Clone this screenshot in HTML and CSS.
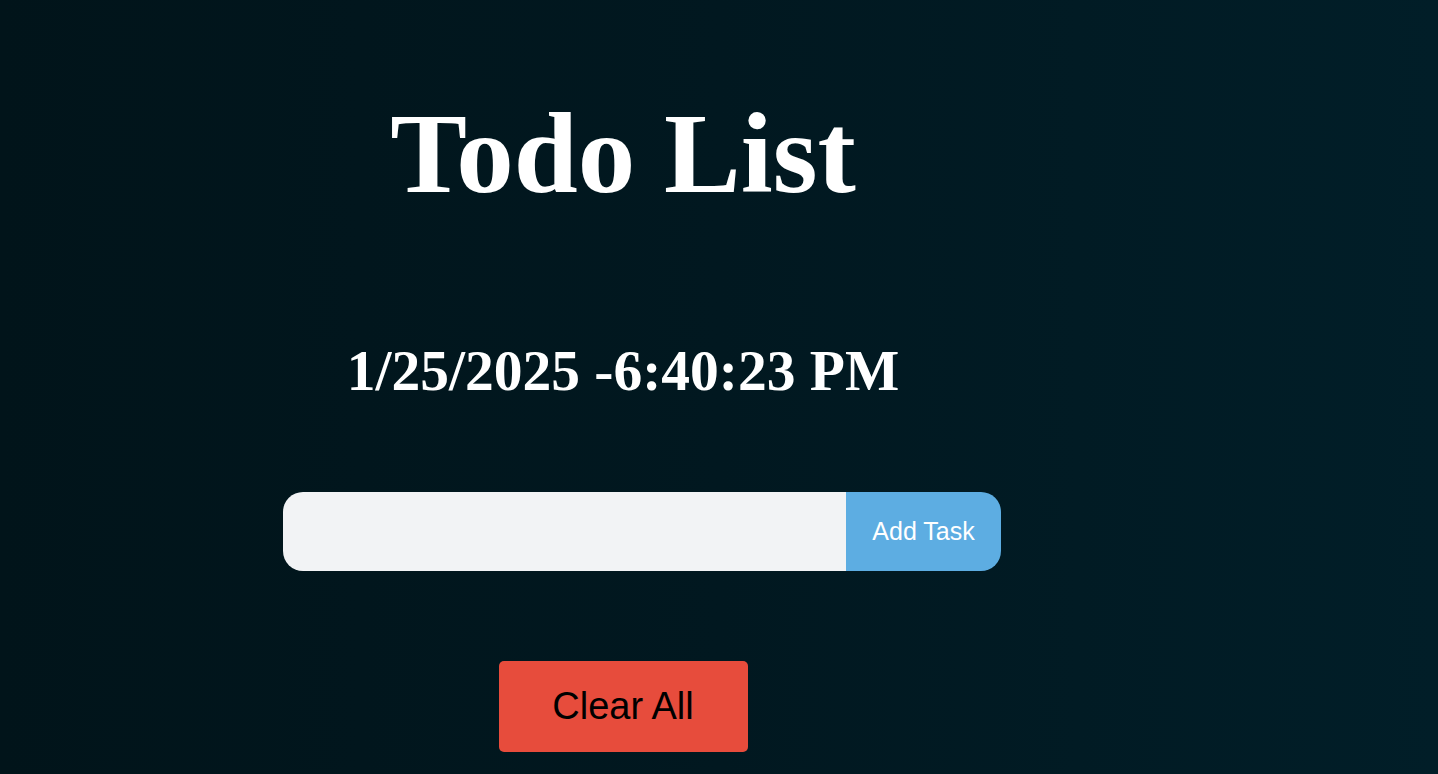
FILE: index.html
```html
<!DOCTYPE html>
<html lang="en">
<head>
<meta charset="utf-8">
<title>Todo List</title>
<link rel="stylesheet" href="styles.css">
</head>
<body>
<main class="app">
  <h1 class="title">Todo List</h1>
  <h2 class="datetime">1/25/2025 -6:40:23 PM</h2>
  <form class="task-form">
    <input class="task-input" type="text" aria-label="New task">
    <button class="add-btn" type="button">Add Task</button>
  </form>
  <ul class="task-list"></ul>
  <button class="clear-btn" type="button">Clear All</button>
</main>
</body>
</html>
```

FILE: styles.css
```css
html, body {
  height: 100%;
}
body {
  margin: 0;
  background: linear-gradient(to right, #01141a 0%, #011820 50%, #011e28 100%);
  font-family: "Liberation Serif", "Times New Roman", serif;
  color: #ffffff;
  overflow: hidden;
}
.app {
  width: 1230px;
  margin-left: 8px;
  padding-top: 92px;
  display: flex;
  flex-direction: column;
  align-items: center;
}
.title {
  margin: 0;
  font-size: 115px;
  font-weight: bold;
  line-height: 124px;
}
.datetime {
  margin: 124px 0 0;
  font-size: 57.5px;
  font-weight: bold;
  line-height: 62px;
}
.task-form {
  margin: 90px 0 0 38px;
  display: flex;
  height: 79px;
}
.task-input {
  width: 563px;
  height: 79px;
  box-sizing: border-box;
  border: none;
  outline: none;
  background: #f2f3f5;
  border-radius: 20px 0 0 20px;
  padding: 0 20px;
  font-family: "Liberation Sans", Arial, sans-serif;
  font-size: 24px;
}
.add-btn {
  width: 155px;
  height: 79px;
  border: none;
  background: #5dade2;
  color: #ffffff;
  border-radius: 0 20px 20px 0;
  font-family: "Liberation Sans", Arial, sans-serif;
  font-size: 25px;
  padding: 0;
}
.task-list {
  margin: 0;
  padding: 0;
  list-style: none;
}
.clear-btn {
  margin-top: 90px;
  width: 249px;
  height: 91px;
  border: none;
  border-radius: 5px;
  background: #e74c3c;
  color: #000000;
  font-family: "Liberation Sans", Arial, sans-serif;
  font-size: 38px;
  padding: 0;
}
```
